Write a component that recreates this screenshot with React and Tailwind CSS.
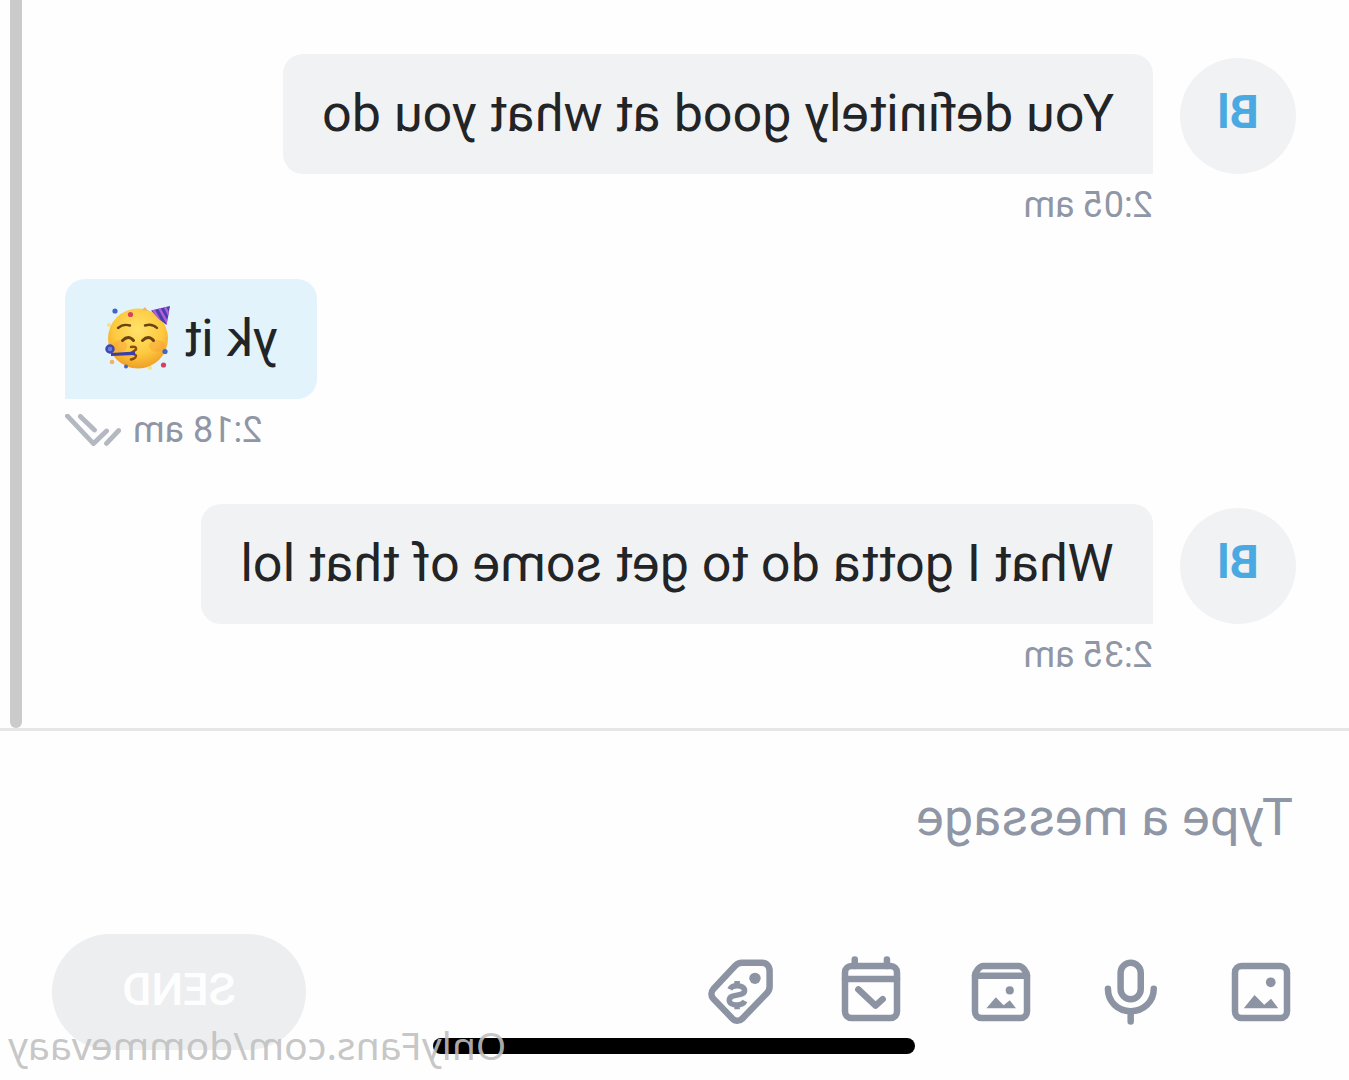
import React from "react";

function Avatar({ initials }) {
  return (
    <div className="mt-1 flex size-29 shrink-0 items-center justify-center rounded-full bg-[#f1f2f4] pb-2 text-[46px] font-bold text-[#4ba9e2]">
      {initials}
    </div>
  );
}

function PartyFace() {
  return (
    <svg viewBox="0 0 68 68" className="size-17 shrink-0" role="img" aria-label="Partying face">
      <defs>
        <radialGradient id="face" cx="0.5" cy="0.35" r="0.68">
          <stop offset="0" stopColor="#ffe36a" />
          <stop offset="0.6" stopColor="#fdc93f" />
          <stop offset="1" stopColor="#ee9a22" />
        </radialGradient>
        <clipPath id="hat">
          <path d="M2 1 21 5.5 13 14 5.5 20Z" />
        </clipPath>
      </defs>
      <circle cx="34" cy="33.5" r="30" fill="url(#face)" />
      <ellipse cx="15" cy="41" rx="8" ry="6" fill="#f7953c" opacity="0.35" />
      <ellipse cx="52" cy="41" rx="7" ry="6" fill="#f7953c" opacity="0.35" />
      <g clipPath="url(#hat)">
        <path d="M0 0h24v22H0z" fill="#4a3fb0" />
        <path d="M8 0 2 12M14 1 4 19M20 2 8 23" stroke="#b95fd6" strokeWidth="2.4" />
      </g>
      <g fill="none" stroke="#6b4312" strokeWidth="2.4" strokeLinecap="round">
        <path d="M15 23q5-5 12-2.5M42 20.5q7-2 12 2.5" />
        <path d="M18.5 35.5q5-6 11 0M38.5 35.5q5-6 11 0" strokeWidth="3" />
        <path d="M41 42q-6-1-5 2.5l4 3-4 3q0 3 5 4" stroke="#8a4c12" />
      </g>
      <path d="M37 46.5 61 48v3l-24-1z" fill="#3c3fa5" />
      <circle cx="62" cy="44" r="3.5" fill="#6a7de0" stroke="#3f48ae" strokeWidth="2.5" />
      <g fill="#3e66c9">
        <circle cx="57" cy="6" r="2.6" />
        <circle cx="7" cy="46.5" r="2.6" />
        <circle cx="46" cy="61.5" r="2" />
      </g>
      <g fill="#d83f5f">
        <circle cx="41.5" cy="9.5" r="2.6" />
        <circle cx="8.5" cy="60" r="2.6" />
      </g>
      <g fill="#f2b266">
        <path d="M24 6 27 2l3 3z" />
        <circle cx="60" cy="57" r="2.3" />
      </g>
      <g fill="#f7e27a">
        <circle cx="63" cy="20" r="2" />
        <circle cx="22" cy="63" r="2" />
      </g>
    </svg>
  );
}

function ReadMark() {
  return (
    <svg
      viewBox="0 0 57 33"
      className="h-8 w-14"
      fill="none"
      stroke="#b4b8c1"
      strokeWidth="5"
      strokeLinecap="round"
      role="img"
      aria-label="Read"
    >
      <path d="M14.5 17.5 28 30.5 55 2M27 16.5 41.5 2.5M2 17 14.5 30.3" />
    </svg>
  );
}

function Received({ initials, text, time }) {
  return (
    <li className="flex items-start gap-[27px]">
      <Avatar initials={initials} />
      <div>
        <p className="flex h-30 items-center rounded-[20px] rounded-bl-none bg-[#f1f2f4] px-[39px] text-[52px] text-[#222426]">
          {text}
        </p>
        <time className="mt-2 block text-[36px] leading-[46px] text-[#8f96a5]">{time}</time>
      </div>
    </li>
  );
}

function Sent({ text, time }) {
  return (
    <li className="flex flex-col items-end">
      <p className="flex h-30 items-center gap-3 rounded-[20px] rounded-br-none bg-[#e3f3fc] px-[39px] text-[52px] text-[#222426]">
        <span>{text}</span>
        <PartyFace />
      </p>
      <div className="mt-2 flex items-center gap-3">
        <time className="text-[36px] leading-[46px] text-[#8f96a5]">{time}</time>
        <ReadMark />
      </div>
    </li>
  );
}

function ToolButton({ label, children }) {
  return (
    <button type="button" aria-label={label} className="size-[78px] shrink-0">
      <svg
        viewBox="0 0 24 24"
        className="size-full"
        fill="none"
        stroke="currentColor"
        strokeWidth="2"
        strokeLinecap="round"
        strokeLinejoin="round"
      >
        {children}
      </svg>
    </button>
  );
}

export default function App() {
  return (
    <div className="relative flex min-h-screen -scale-x-100 flex-col overflow-hidden bg-[#fefefe] font-['Roboto',sans-serif]">
      <main className="flex flex-1">
        <ul className="flex flex-1 flex-col gap-[51px] pt-[54px] pr-[43px] pb-[50px] pl-[53px]">
          <Received initials="Bl" text="You definitely good at what you do" time="2:05 am" />
          <Sent text="yk it" time="2:18 am" />
          <Received initials="Bl" text="What I gotta do to get some of that lol" time="2:35 am" />
        </ul>
        <div className="mr-[10px] w-[12px] rounded-b-full bg-[#cbcbcb]" />
      </main>

      <form className="border-t-3 border-[#e6e6e6] px-[52px] pb-[30px]" onSubmit={(e) => e.preventDefault()}>
        <input
          type="text"
          aria-label="Message"
          placeholder="Type a message"
          className="mt-[50px] mb-[79px] block h-[74px] w-full bg-transparent px-1 text-[52px] outline-none placeholder:text-[#8f96a5] placeholder:opacity-100"
        />
        <div className="flex items-center justify-between">
          <div className="-ml-[3px] flex gap-[52px] text-[#8c94a3]">
            <ToolButton label="Add photo">
              <rect x="4" y="4" width="16" height="16" rx="2" />
              <circle cx="9" cy="9" r="1.5" fill="currentColor" stroke="none" />
              <path d="M6.7 17 8.9 14.1 11 15.9 14 12.9 17.3 17Z" fill="currentColor" stroke="none" />
            </ToolButton>
            <ToolButton label="Record voice message">
              <rect x="9" y="3" width="6.2" height="11.2" rx="3.1" />
              <path d="M5 11c0 4 3.2 6.9 7.1 6.9S19.1 15 19.1 11M12.1 18v3.1" />
            </ToolButton>
            <ToolButton label="Open vault">
              <path d="M6.5 4h11C18.5 4 20 5.8 20 7v11a2 2 0 0 1-2 2H6a2 2 0 0 1-2-2V7c0-1.2 1.5-3 2.5-3Z" />
              <path d="M4 7h16" />
              <circle cx="9.3" cy="11.5" r="1.25" fill="currentColor" stroke="none" />
              <path d="M7.4 17 9.3 14.5 11.2 16.1 13.6 13.6 16.5 17Z" fill="currentColor" stroke="none" />
            </ToolButton>
            <ToolButton label="Schedule message">
              <rect x="4" y="4" width="16" height="16" rx="2" />
              <path d="M4 8h16M7.1 2v2M17 2v2M8.4 14.2l2.2 2L15.9 11.2" />
            </ToolButton>
            <ToolButton label="Set price">
              <path d="M5.6 3h6.1c.9 0 1.5.3 2.1.9l6.7 7.2c.8.9.8 2.1 0 3l-5.9 6.1c-.8.9-2.1.9-3 0l-7.6-7.9c-.6-.6-.8-1.2-.8-2V5.5C3.2 4 4.2 3 5.6 3Z" />
              <circle cx="7.7" cy="7.8" r="1.75" fill="currentColor" stroke="none" />
              <path
                d="M15.4 11.2c-.3-.7-1-1.1-2.2-1.1-1.4 0-2.3.6-2.3 1.4 0 2.1 4.7.8 4.7 3 0 .9-1 1.5-2.4 1.5-1.2 0-2-.4-2.4-1.2M13.2 8.6v1.4M13.2 16v1.3"
                strokeWidth="1.7"
                strokeLinecap="butt"
              />
            </ToolButton>
          </div>
          <button
            type="submit"
            disabled
            className="h-29 w-[254px] rounded-full bg-[#edeef0] pb-[5px] text-[45px] font-medium text-[#fefefe]"
          >
            SEND
          </button>
        </div>
      </form>

      <div className="absolute bottom-[26px] left-1/2 h-4 w-[482px] -translate-x-1/2 rounded-full bg-black" />
      <p className="absolute right-2 bottom-[11px] font-['Noto_Sans',sans-serif] text-[39px] leading-[48px] text-[#c0c0c0]/90">
        OnlyFans.com/dommevaay
      </p>
    </div>
  );
}
